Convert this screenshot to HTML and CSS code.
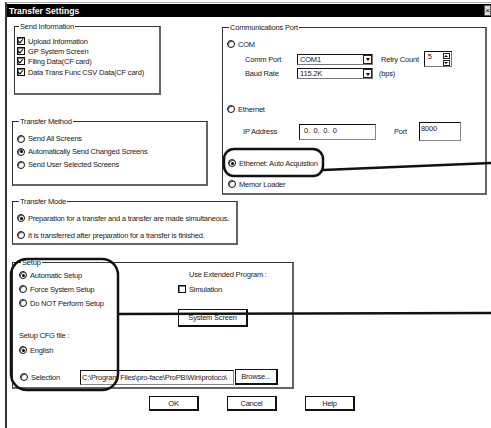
FILE: index.html
```html
<!DOCTYPE html>
<html lang="en">
<head>
  <meta charset="UTF-8" />
  <title>Transfer Settings</title>
  <link rel="stylesheet" href="styles.css">
</head>
<body>
  <div class="window">
    <div class="titlebar">
      <span>Transfer Settings</span>
      <span class="close">&#215;</span>
    </div>

    <div class="content">
      <div class="top">
        <div class="left-col">
          <fieldset class="group send-info">
            <legend>Send Information</legend>
            <div class="opt"><span class="check on"></span>Upload Information</div>
            <div class="opt"><span class="check on"></span>GP System Screen</div>
            <div class="opt"><span class="check on"></span>Filing Data(CF card)</div>
            <div class="opt last"><span class="check on"></span>Data Trans Func CSV Data(CF card)</div>
          </fieldset>

          <fieldset class="group method">
            <legend>Transfer Method</legend>
            <div class="opt"><span class="radio"></span>Send All Screens</div>
            <div class="opt"><span class="radio on"></span>Automatically Send Changed Screens</div>
            <div class="opt"><span class="radio"></span>Send User Selected Screens</div>
          </fieldset>
        </div>

        <fieldset class="group comm">
          <legend>Communications Port</legend>
          <div class="opt"><span class="radio"></span>COM</div>
          <div class="field-row port-row">
            <span class="lbl">Comm Port</span>
            <span class="combo">COM1<span class="drop"></span></span>
            <span class="lbl retry">Retry Count</span>
            <span class="spin">5<span class="spin-btns"><span class="up"></span><span class="down"></span></span></span>
          </div>
          <div class="field-row baud-row">
            <span class="lbl">Baud Rate</span>
            <span class="combo">115.2K<span class="drop"></span></span>
            <span class="unit">(bps)</span>
          </div>
          <div class="opt eth"><span class="radio"></span>Ethernet</div>
          <div class="field-row ip-row">
            <span class="lbl">IP Address</span>
            <span class="edit ip">0.&nbsp;&nbsp;0.&nbsp;&nbsp;0.&nbsp;&nbsp;0</span>
            <span class="lbl port-lbl">Port</span>
            <span class="edit port">8000</span>
          </div>
          <div class="opt auto"><span class="radio on"></span>Ethernet: Auto Acquistion</div>
          <div class="opt memor"><span class="radio"></span>Memor Loader</div>
        </fieldset>
      </div>

      <fieldset class="group mode">
        <legend>Transfer Mode</legend>
        <div class="opt"><span class="radio on"></span>Preparation for a transfer and a transfer are made simultaneous.</div>
        <div class="opt second"><span class="radio"></span>It is transferred after preparation for a transfer is finished.</div>
      </fieldset>

      <fieldset class="group setup">
        <legend>Setup</legend>
        <div class="setup-top">
          <div class="setup-left">
            <div class="opt"><span class="radio on"></span>Automatic Setup</div>
            <div class="opt"><span class="radio"></span>Force System Setup</div>
            <div class="opt"><span class="radio"></span>Do NOT Perform Setup</div>
            <div class="cfg-label">Setup CFG file :</div>
            <div class="opt english"><span class="radio on"></span>English</div>
          </div>
          <div class="setup-right">
            <div class="ext-label">Use Extended Program :</div>
            <div class="opt sim"><span class="check"></span>Simulation</div>
            <button class="btn sys-btn">System Screen</button>
          </div>
        </div>
        <div class="selection-row">
          <div class="opt"><span class="radio"></span>Selection</div>
          <span class="edit path">C:\Program Files\pro-face\ProPB\Win\protoco\</span>
          <button class="btn browse">Browse...</button>
        </div>
      </fieldset>

      <div class="buttons">
        <button class="btn">OK</button>
        <button class="btn">Cancel</button>
        <button class="btn">Help</button>
      </div>
    </div>

    <!-- callout marks drawn over the dialog -->
    <svg class="marks" width="486" height="428" viewBox="0 0 486 428">
      <rect x="217" y="149" width="99" height="27" rx="10" />
      <line x1="316" y1="170" x2="486" y2="163" />
      <rect x="4" y="259" width="107" height="131" rx="16" />
      <line x1="111" y1="314" x2="486" y2="313" />
    </svg>
  </div>
</body>
</html>
```

FILE: styles.css
```css
body { margin: 0; background: #fff; color: #1a1a1a; font-family: "Liberation Sans", Arial, sans-serif; font-size: 7.5px; letter-spacing: -0.2px; }

.window { position: relative; margin-left: 5px; height: 428px; border-left: 2px solid #333; border-top: 1px solid #aaa; margin-top: 2px; box-sizing: border-box; }

.titlebar { display: flex; justify-content: space-between; align-items: center; height: 13px; margin-top: 1px; background: #000; color: #fff; font-weight: bold; font-size: 8.6px; letter-spacing: 0; padding-left: 2px; }
.close { width: 7px; height: 11px; background: #ddd; color: #000; border: 1px solid #555; font-size: 8px; line-height: 10px; text-align: center; font-weight: normal; box-sizing: border-box; }

.content { padding: 5px 0 0 5px; }

.top { display: flex; align-items: flex-start; }
.left-col { width: 196px; }

.group { margin: 0; padding: 0; border: 1px solid #333; border-right: 2px solid #666; border-bottom: 2px solid #666; box-sizing: border-box; min-width: 0; }
.group legend { padding: 0 1px; margin-left: 2px; line-height: 9px; }

.opt { display: flex; align-items: center; height: 10px; white-space: nowrap; }

.check { flex-shrink: 0; width: 8px; height: 8px; margin-right: 3px; border: 1px solid #111; box-sizing: border-box; position: relative; background: #fff; box-shadow: inset 1px 1px 0 #777; }
.check.on::after { content: ""; position: absolute; left: 1px; top: 0; width: 2px; height: 4px; border: solid #000; border-width: 0 1.5px 1.5px 0; transform: rotate(40deg); }

.radio { flex-shrink: 0; width: 8px; height: 8px; margin-right: 3px; border: 1px solid #111; border-radius: 50%; box-sizing: border-box; position: relative; background: #fff; box-shadow: inset 1px 1px 0 #666; }
.radio.on::after { content: ""; position: absolute; left: 1.5px; top: 1.5px; width: 3px; height: 3px; border-radius: 50%; background: #000; }

/* Send Information */
.send-info { width: 147px; height: 73px; margin-left: 2px; padding: 5px 0 0 2px; }
.send-info .last { margin-top: 1px; }

/* Transfer Method */
.method { width: 196px; height: 69px; margin-top: 22px; padding: 6px 0 0 4px; }
.method .opt { height: 13px; }

/* Communications Port */
.comm { width: 265px; height: 172px; margin-left: 14px; padding: 7px 0 0 4px; margin-top: 1px; }
.field-row { display: flex; align-items: center; padding-left: 18px; }
.field-row .lbl { width: 52px; }
.port-row { height: 16px; margin-top: 2px; }
.baud-row { height: 11px; margin-top: 1px; }
.combo { position: relative; width: 76px; height: 11px; border: 1px solid #111; border-right-color: #777; border-bottom-color: #777; box-sizing: border-box; padding-left: 2px; line-height: 9px; background: #fff; }
.drop { position: absolute; right: 0; top: 0; width: 9px; height: 9px; border: 1px solid #222; box-sizing: border-box; background: #fff; }
.drop::after { content: ""; position: absolute; left: 1.5px; top: 2.5px; border-left: 2.5px solid transparent; border-right: 2.5px solid transparent; border-top: 3px solid #000; }
.retry { width: auto !important; margin-left: 8px; margin-right: 5px; }
.spin { position: relative; width: 28px; height: 16px; border: 1px solid #111; border-right-color: #777; border-bottom-color: #777; box-sizing: border-box; padding: 1px 0 0 3px; line-height: 8px; }
.spin-btns { position: absolute; right: 1px; top: 1px; width: 7px; display: flex; flex-direction: column; gap: 1px; }
.spin-btns span { position: relative; height: 6px; border: 1px solid #222; box-sizing: border-box; }
.spin-btns .up::after { content: ""; position: absolute; left: 0.5px; top: 1px; border-left: 2px solid transparent; border-right: 2px solid transparent; border-bottom: 2px solid #000; }
.spin-btns .down::after { content: ""; position: absolute; left: 0.5px; top: 1px; border-left: 2px solid transparent; border-right: 2px solid transparent; border-top: 2px solid #000; }
.unit { margin-left: 6px; }
.eth { margin-top: 25px; }
.ip-row { height: 19px; margin-top: 8px; padding-left: 16px; }
.ip-row .lbl { width: 56px; }
.edit { height: 16px; border: 1px solid #111; border-right-color: #888; border-bottom-color: #888; box-sizing: border-box; padding: 2px 0 0 4px; line-height: 8px; background: #fff; overflow: hidden; white-space: nowrap; }
.ip { width: 77px; }
.port-lbl { width: auto !important; margin-left: 18px; margin-right: 12px; }
.port { width: 42px; height: 19px; padding: 2px 0 0 1px; align-self: flex-start; }
.auto { margin-top: 17px; padding-left: 1px; }
.memor { margin-top: 11px; padding-left: 1px; }

/* Transfer Mode */
.mode { width: 226px; height: 48px; margin-top: 2px; padding: 7px 0 0 4px; }
.mode .second { margin-top: 7px; }

/* Setup */
.setup { width: 282px; height: 131px; margin-top: 13px; padding: 1px 0 0 6px; }
.setup-top { display: flex; }
.setup-left { width: 156px; }
.setup-left .opt { height: 14px; }
.cfg-label { margin-top: 21px; height: 10px; line-height: 10px; }
.setup-left .english { margin-top: 4px; height: 10px; }
.setup-right { padding-top: 2px; }
.ext-label { height: 10px; line-height: 10px; padding-left: 14px; }
.sim { margin-top: 4px; padding-left: 3px; }
.btn { font: inherit; letter-spacing: inherit; color: inherit; background: #fff; border: 1px solid #111; border-right-width: 2px; border-bottom-width: 2px; padding: 0; height: 15px; line-height: 11px; cursor: pointer; }
.sys-btn { display: block; width: 70px; height: 18px; margin-top: 15px; margin-left: 3px; }
.selection-row { display: flex; align-items: center; margin-top: 14px; height: 16px; }
.selection-row .opt { width: 60px; padding-left: 1px; }
.path { width: 154px; height: 15px; padding: 1px 0 0 1px; line-height: 12px; }
.browse { width: 43px; height: 16px; margin-left: 1px; }

/* bottom buttons */
.buttons { display: flex; gap: 28px; margin-top: 7px; padding-left: 137px; }
.buttons .btn { width: 50px; }

.marks { position: absolute; left: 0; top: -3px; pointer-events: none; }
.marks rect, .marks line { fill: none; stroke: #111; stroke-width: 2.5; }
```
